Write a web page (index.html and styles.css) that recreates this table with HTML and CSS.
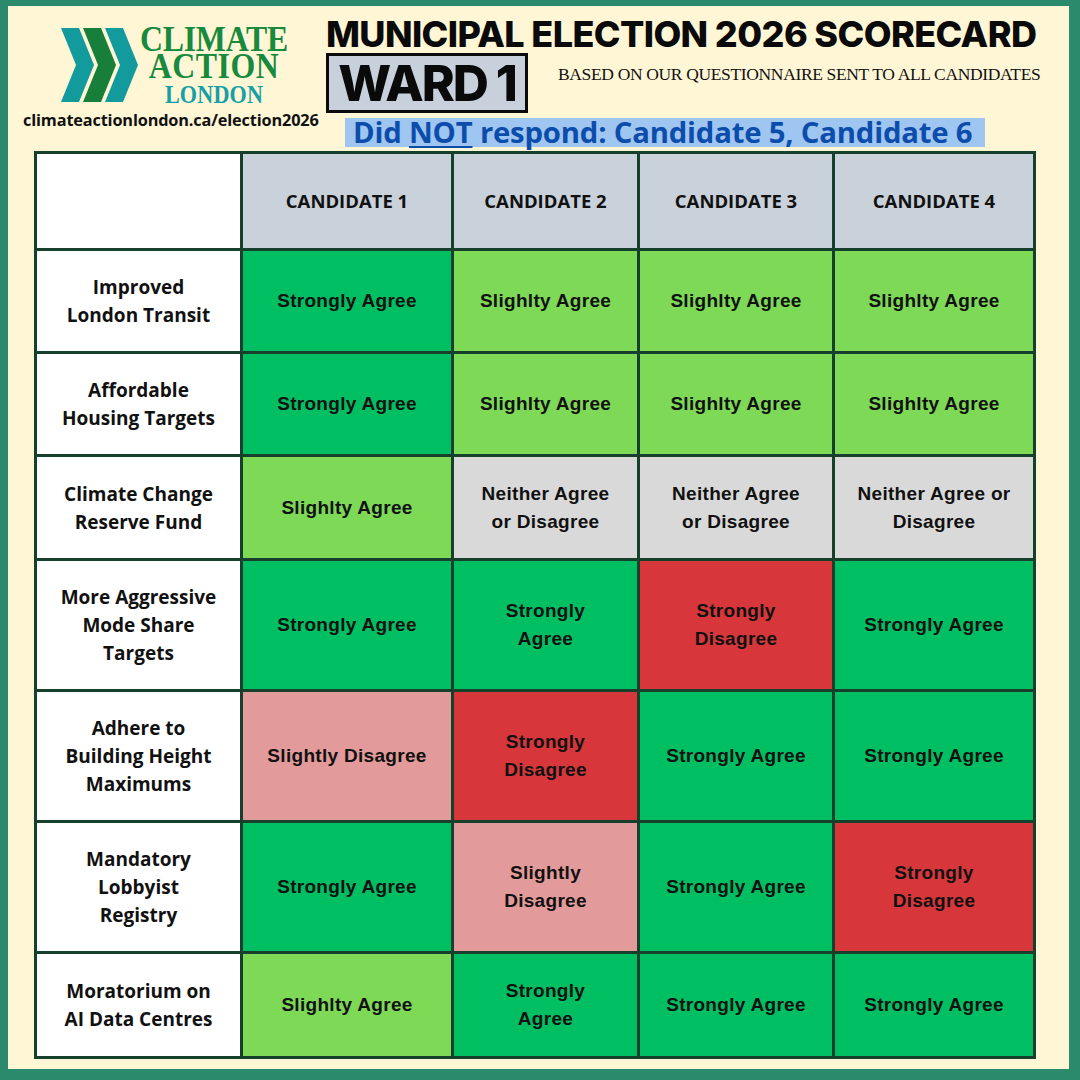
FILE: index.html
```html
<!DOCTYPE html>
<html lang="en">
<head>
<meta charset="utf-8">
<title>Municipal Election 2026 Scorecard – Ward 1</title>
<link rel="stylesheet" href="styles.css">
</head>
<body>
<div class="page">
  <header class="head">
    <div class="brand">
      <div class="logo">
        <svg class="chevrons" width="79" height="76" viewBox="0 0 79 76" aria-hidden="true">
          <polygon points="0,0 18,0 33,37 18,74 0,74 15,37" fill="#139a9c"/>
          <polygon points="22,0 40,0 55,37 40,74 22,74 37,37" fill="#177f3a"/>
          <polygon points="44,0 62,0 77,37 62,74 44,74 59,37" fill="#139a9c"/>
        </svg>
        <div class="wordmark">
          <span class="wm-line wm-climate">CLIMATE</span>
          <span class="wm-line wm-action">ACTION</span>
          <span class="wm-line wm-london">LONDON</span>
        </div>
      </div>
      <div class="url">climateactionlondon.ca/election2026</div>
    </div>
    <div class="titles">
      <h1 class="title">MUNICIPAL ELECTION 2026 SCORECARD</h1>
      <div class="subrow">
        <div class="ward">WARD 1</div>
        <div class="basis">BASED ON OUR QUESTIONNAIRE SENT TO ALL CANDIDATES</div>
      </div>
      <div class="noresp-wrap"><span class="noresp">Did <u>NOT</u> respond: Candidate 5, Candidate 6</span></div>
    </div>
  </header>

  <div class="grid">
    <div class="cell blank"></div>
    <div class="cell hd">CANDIDATE 1</div>
    <div class="cell hd">CANDIDATE 2</div>
    <div class="cell hd">CANDIDATE 3</div>
    <div class="cell hd">CANDIDATE 4</div>

    <div class="cell lbl">Improved<br>London Transit</div>
    <div class="cell sa">Strongly Agree</div>
    <div class="cell la">Slighlty Agree</div>
    <div class="cell la">Slighlty Agree</div>
    <div class="cell la">Slighlty Agree</div>

    <div class="cell lbl">Affordable<br>Housing Targets</div>
    <div class="cell sa">Strongly Agree</div>
    <div class="cell la">Slighlty Agree</div>
    <div class="cell la">Slighlty Agree</div>
    <div class="cell la">Slighlty Agree</div>

    <div class="cell lbl">Climate Change<br>Reserve Fund</div>
    <div class="cell la">Slighlty Agree</div>
    <div class="cell ne">Neither Agree<br>or Disagree</div>
    <div class="cell ne">Neither Agree<br>or Disagree</div>
    <div class="cell ne">Neither Agree or<br>Disagree</div>

    <div class="cell lbl">More Aggressive<br>Mode Share<br>Targets</div>
    <div class="cell sa">Strongly Agree</div>
    <div class="cell sa">Strongly<br>Agree</div>
    <div class="cell sd">Strongly<br>Disagree</div>
    <div class="cell sa">Strongly Agree</div>

    <div class="cell lbl">Adhere to<br>Building Height<br>Maximums</div>
    <div class="cell ld">Slightly Disagree</div>
    <div class="cell sd">Strongly<br>Disagree</div>
    <div class="cell sa">Strongly Agree</div>
    <div class="cell sa">Strongly Agree</div>

    <div class="cell lbl">Mandatory<br>Lobbyist<br>Registry</div>
    <div class="cell sa">Strongly Agree</div>
    <div class="cell ld">Slightly<br>Disagree</div>
    <div class="cell sa">Strongly Agree</div>
    <div class="cell sd">Strongly<br>Disagree</div>

    <div class="cell lbl">Moratorium on<br>AI Data Centres</div>
    <div class="cell la">Slighlty Agree</div>
    <div class="cell sa">Strongly<br>Agree</div>
    <div class="cell sa">Strongly Agree</div>
    <div class="cell sa">Strongly Agree</div>
  </div>
</div>
</body>
</html>
```

FILE: styles.css
```css
* { box-sizing: border-box; }

html, body {
  margin: 0;
  padding: 0;
}

body {
  width: 1080px;
  height: 1080px;
  font-family: "Open Sans", "Liberation Sans", sans-serif;
  color: #111;
}

.page {
  width: 1080px;
  height: 1080px;
  background: #fff6d6;
  border-style: solid;
  border-color: #2b8a6c;
  border-width: 6px 11px 11px 8px;
  padding: 0 0 0 26px;
  display: flex;
  flex-direction: column;
}

/* ---------- header ---------- */
.head {
  height: 145px;
  display: flex;
}

.brand {
  width: 294px;
  margin-left: -11px;
  display: flex;
  flex-direction: column;
}

.logo {
  display: flex;
  margin-top: 22px;
  margin-left: 38px;
  height: 80px;
}

.chevrons {
  flex: none;
}

.wordmark {
  display: flex;
  flex-direction: column;
  align-items: center;
  font-family: "Liberation Serif", "Times New Roman", serif;
  font-weight: 700;
  margin-top: -2px;
  transform: scaleX(0.885);
  transform-origin: left top;
}

.wm-line { display: block; white-space: nowrap; }

.wm-climate {
  color: #178a3d;
  font-size: 36px;
  line-height: 27px;
  letter-spacing: -0.3px;
}

.wm-action {
  color: #178a3d;
  font-size: 36px;
  line-height: 27px;
  letter-spacing: 0.6px;
}

.wm-london {
  color: #15a0a6;
  font-size: 25px;
  line-height: 29px;
  letter-spacing: 0.2px;
}

.url {
  font-family: "Open Sans", sans-serif;
  font-weight: 700;
  font-size: 16.3px;
  line-height: 20px;
  margin-top: 2px;
  letter-spacing: -0.15px;
  color: #111;
  white-space: nowrap;
}

.titles {
  flex: 1;
  display: flex;
  flex-direction: column;
  padding-left: 9px;
}

.title {
  margin: 9px 0 0 0;
  font-family: "Inter", "Liberation Sans", sans-serif;
  font-weight: 800;
  font-size: 36px;
  line-height: 38px;
  letter-spacing: -0.6px;
  color: #0a0a0a;
  white-space: nowrap;
}

.subrow {
  display: flex;
  align-items: flex-start;
}

.ward {
  width: 202px;
  height: 60px;
  background: #c8d0db;
  border: 3px solid #0a0a0a;
  font-family: "Inter", "Liberation Sans", sans-serif;
  font-weight: 800;
  font-size: 50px;
  line-height: 54px;
  letter-spacing: -2px;
  text-align: center;
  color: #0a0a0a;
}

.basis {
  margin: 11px 0 0 30px;
  font-family: "Liberation Serif", "Times New Roman", serif;
  font-size: 17.5px;
  line-height: 20px;
  letter-spacing: -0.35px;
  white-space: nowrap;
  color: #111;
}

.noresp-wrap {
  margin-top: 5px;
  padding-left: 19px;
}

.noresp {
  display: inline-block;
  background: #9fc5f1;
  color: #0c4dac;
  font-family: "Open Sans", sans-serif;
  font-weight: 700;
  font-size: 29.3px;
  line-height: 29px;
  padding: 0 13px 0 8px;
  letter-spacing: -0.2px;
  white-space: nowrap;
}

.noresp u {
  text-decoration-thickness: 2px;
  text-underline-offset: 3px;
}

/* ---------- grid ---------- */
.grid {
  display: grid;
  grid-template-columns: 203px 208px 183px 192px 198px;
  grid-template-rows: 94px 100px 100px 101px 128px 128px 128px 102px;
  gap: 3px;
  padding: 3px;
  width: 1002px;
  background: #163f2c;
}

.cell {
  display: flex;
  align-items: center;
  justify-content: center;
  text-align: center;
  font-family: "Liberation Sans", Arial, sans-serif;
  font-weight: 700;
  font-size: 19px;
  line-height: 28px;
  letter-spacing: 0.3px;
  color: #111;
}

.blank { background: #ffffff; }

.hd {
  background: #c9d1db;
  font-family: "Open Sans", sans-serif;
  font-size: 18.5px;
  letter-spacing: 0;
}

.lbl {
  background: #ffffff;
  font-family: "Open Sans", sans-serif;
  font-size: 19px;
  letter-spacing: 0;
}

.sa { background: #00bf63; }
.la { background: #7ed957; }
.ne { background: #d9d9d9; }
.sd { background: #d7373b; }
.ld { background: #e39a9a; }
```
